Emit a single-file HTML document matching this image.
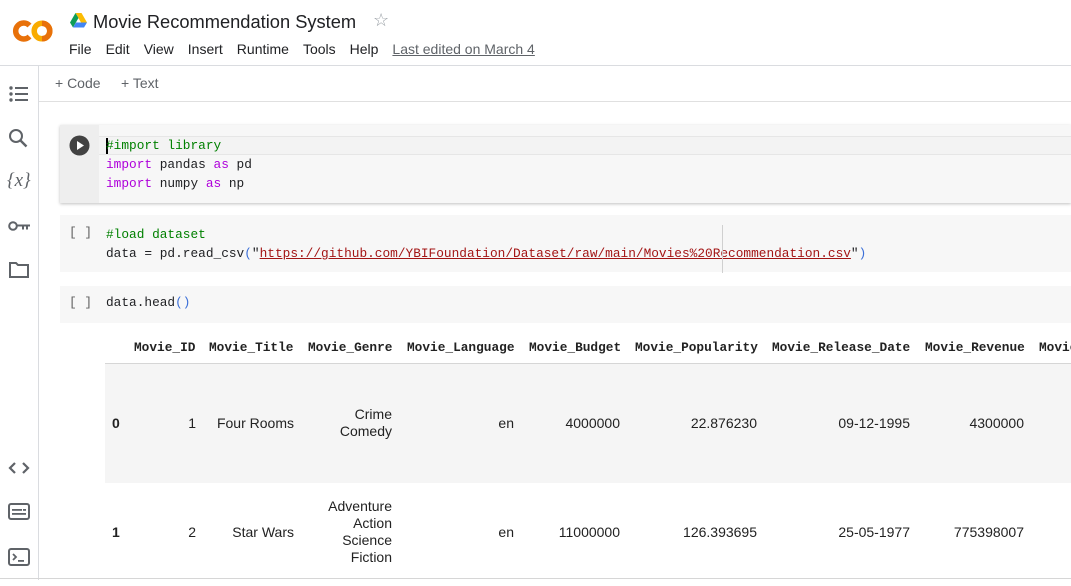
<!DOCTYPE html>
<html><head><meta charset="utf-8"><style>
*{margin:0;padding:0;box-sizing:border-box}
body{width:1071px;height:586px;overflow:hidden;background:#fff;font-family:"Liberation Sans",Arial,sans-serif;color:#202124;position:relative}
.a{position:absolute;white-space:nowrap}
.mono{font-family:"Liberation Mono",monospace;font-size:12.8px}
.cm{color:#008000}.kw{color:#af00db}.st{color:#a31515;text-decoration:underline;text-decoration-color:#a31515}.pn{color:#3b6fd8}
.th{font-family:"Liberation Mono",monospace;font-weight:bold;font-size:12.8px;color:#222;top:340px}
.td{font-size:14px;color:#222;text-align:right;line-height:17px}
.menu span{margin-right:14px}
</style></head><body>
<!-- header -->
<svg class="a" style="left:12px;top:18px" width="42" height="26" viewBox="0 0 42 26">
<path d="M17.5 7.5 A8 8 0 1 0 17.5 18.5" fill="none" stroke="#e8710a" stroke-width="5.5"/>
<circle cx="30" cy="13" r="7.8" fill="none" stroke="#f9ab00" stroke-width="5.5"/>
<path d="M30 5.2 A7.8 7.8 0 0 1 30 20.8" fill="none" stroke="#e8710a" stroke-width="5.5"/>
</svg>
<svg class="a" style="left:70px;top:13px" width="17" height="15" viewBox="0 0 17 15">
<path d="M5.5 0h6l5.5 9.5h-6z" fill="#fbbc04"/><path d="M5.5 0L0 9.5l3 5 5.5-9.5z" fill="#0f9d58"/><path d="M3 14.5h11l3-5H6z" fill="#4285f4"/>
</svg>
<div class="a" style="left:93px;top:11px;font-size:18.3px;color:#202124">Movie Recommendation System</div>
<div class="a" style="left:373px;top:10px;font-size:18px;color:#9aa0a6">☆</div>
<div class="a menu" style="left:69px;top:41px;font-size:14px;color:#202124"><span>File</span><span>Edit</span><span>View</span><span>Insert</span><span>Runtime</span><span>Tools</span><span>Help</span><span style="color:#5f6368;text-decoration:underline;margin-left:0">Last edited on March 4</span></div>
<div class="a" style="left:0;top:65px;width:1071px;height:1px;background:#dadce0"></div>
<!-- sidebar -->
<div class="a" style="left:38px;top:66px;width:1px;height:514px;background:#dadce0"></div>
<svg class="a" style="left:8px;top:84px" width="22" height="20" viewBox="0 0 22 20" fill="#5f6368"><circle cx="3" cy="4" r="1.7"/><circle cx="3" cy="10" r="1.7"/><circle cx="3" cy="16" r="1.7"/><rect x="7" y="3" width="13" height="2"/><rect x="7" y="9" width="13" height="2"/><rect x="7" y="15" width="13" height="2"/></svg>
<svg class="a" style="left:8px;top:128px" width="22" height="22" viewBox="0 0 22 22"><circle cx="8" cy="8" r="6" fill="none" stroke="#5f6368" stroke-width="2"/><path d="M12.5 12.5l6 6" stroke="#5f6368" stroke-width="2.4"/></svg>
<div class="a" style="left:7px;top:170px;font-family:'Liberation Serif',serif;font-style:italic;font-size:19px;color:#5f6368">{<i>x</i>}</div>
<svg class="a" style="left:8px;top:219px" width="24" height="14" viewBox="0 0 24 14"><circle cx="5" cy="7" r="3.8" fill="none" stroke="#5f6368" stroke-width="2"/><path d="M9 5.5h13v2h-2v3h-2v-3h-2v3h-2v-3H9z" fill="#5f6368"/></svg>
<svg class="a" style="left:8px;top:261px" width="22" height="18" viewBox="0 0 22 18"><path d="M2 2h6l2 2h10v12H2z" fill="none" stroke="#5f6368" stroke-width="2"/></svg>
<svg class="a" style="left:8px;top:461px" width="22" height="14" viewBox="0 0 22 14"><path d="M7 2L2 7l5 5M15 2l5 5-5 5" fill="none" stroke="#5f6368" stroke-width="2.2"/></svg>
<svg class="a" style="left:8px;top:503px" width="22" height="18" viewBox="0 0 22 18"><rect x="1" y="1" width="20" height="15" rx="2" fill="none" stroke="#5f6368" stroke-width="2"/><rect x="4" y="6" width="10" height="1.8" fill="#5f6368"/><rect x="15" y="6" width="3" height="1.8" fill="#5f6368"/><rect x="4" y="10" width="14" height="1.8" fill="#5f6368"/></svg>
<svg class="a" style="left:8px;top:548px" width="22" height="18" viewBox="0 0 22 18"><rect x="1" y="1" width="20" height="16" rx="2" fill="none" stroke="#5f6368" stroke-width="2"/><path d="M5 6l3 3-3 3" fill="none" stroke="#5f6368" stroke-width="1.8"/><rect x="10" y="12" width="6" height="1.8" fill="#5f6368"/></svg>
<!-- toolbar -->
<div class="a" style="left:55px;top:75px;font-size:14px;color:#5f6368">+ Code</div>
<div class="a" style="left:121px;top:75px;font-size:14px;color:#5f6368">+ Text</div>
<div class="a" style="left:39px;top:101px;width:1032px;height:1px;background:#e0e0e0"></div>
<!-- cell 1 -->
<div class="a" style="left:60px;top:125px;width:1011px;height:78px;background:#eeeeee;box-shadow:0 1px 3px rgba(0,0,0,.25)"></div>
<div class="a" style="left:99px;top:125px;width:972px;height:78px;background:#f7f7f7"></div>
<div class="a" style="left:99px;top:136px;width:972px;height:19px;background:#f3f3f3;border-top:1px solid #e6e6e6;border-bottom:1px solid #e6e6e6"></div>
<svg class="a" style="left:69px;top:135px" width="21" height="21" viewBox="0 0 21 21"><circle cx="10.5" cy="10.5" r="10" fill="#424242"/><path d="M8 6v9l7-4.5z" fill="#fff"/></svg>
<div class="a" style="left:106px;top:138px;width:2px;height:16px;background:#000"></div>
<div class="a mono" style="left:106px;top:136px;line-height:19px">
<span class="cm">#import library</span><br><span class="kw">import</span> pandas <span class="kw">as</span> pd<br><span class="kw">import</span> numpy <span class="kw">as</span> np</div>
<!-- cell 2 -->
<div class="a" style="left:60px;top:215px;width:1011px;height:57px;background:#f7f7f7"></div>
<div class="a mono" style="left:69px;top:225px;color:#616161">[ ]</div>
<div class="a mono" style="left:106px;top:225px;line-height:19px"><span class="cm">#load dataset</span><br>data = pd.read_csv<span class="pn">(</span>"<span class="st">https://github.com/YBIFoundation/Dataset/raw/main/Movies%20Recommendation.csv</span>"<span class="pn">)</span></div>
<div class="a" style="left:722px;top:225px;width:1px;height:48px;background:#d0d0d0"></div>
<!-- cell 3 -->
<div class="a" style="left:60px;top:286px;width:1011px;height:37px;background:#f7f7f7"></div>
<div class="a mono" style="left:69px;top:295px;color:#616161">[ ]</div>
<div class="a mono" style="left:106px;top:295px">data.head<span class="pn">()</span></div>
<!-- table -->
<div class="a th" style="left:134px">Movie_ID</div>
<div class="a th" style="left:209px">Movie_Title</div>
<div class="a th" style="left:308px">Movie_Genre</div>
<div class="a th" style="left:407px">Movie_Language</div>
<div class="a th" style="left:529px">Movie_Budget</div>
<div class="a th" style="left:635px">Movie_Popularity</div>
<div class="a th" style="left:772px">Movie_Release_Date</div>
<div class="a th" style="left:925px">Movie_Revenue</div>
<div class="a th" style="left:1039px">Movie_</div>
<div class="a" style="left:105px;top:363px;width:966px;height:1px;background:#d6d6d6"></div>
<div class="a" style="left:105px;top:364px;width:966px;height:119px;background:#f5f5f5"></div>
<div class="a" style="left:0;top:578px;width:1071px;height:1px;background:#d6d6d6"></div>
<div class="a td" style="left:112px;top:415px;font-weight:bold;text-align:left">0</div>
<div class="a td" style="right:875px;top:415px">1</div>
<div class="a td" style="right:777px;top:415px">Four Rooms</div>
<div class="a td" style="right:679px;top:406px">Crime<br>Comedy</div>
<div class="a td" style="right:557px;top:415px">en</div>
<div class="a td" style="right:451px;top:415px">4000000</div>
<div class="a td" style="right:314px;top:415px">22.876230</div>
<div class="a td" style="right:161px;top:415px">09-12-1995</div>
<div class="a td" style="right:47px;top:415px">4300000</div>
<div class="a td" style="left:112px;top:524px;font-weight:bold;text-align:left">1</div>
<div class="a td" style="right:875px;top:524px">2</div>
<div class="a td" style="right:777px;top:524px">Star Wars</div>
<div class="a td" style="right:679px;top:498px">Adventure<br>Action<br>Science<br>Fiction</div>
<div class="a td" style="right:557px;top:524px">en</div>
<div class="a td" style="right:451px;top:524px">11000000</div>
<div class="a td" style="right:314px;top:524px">126.393695</div>
<div class="a td" style="right:161px;top:524px">25-05-1977</div>
<div class="a td" style="right:47px;top:524px">775398007</div>
</body></html>
